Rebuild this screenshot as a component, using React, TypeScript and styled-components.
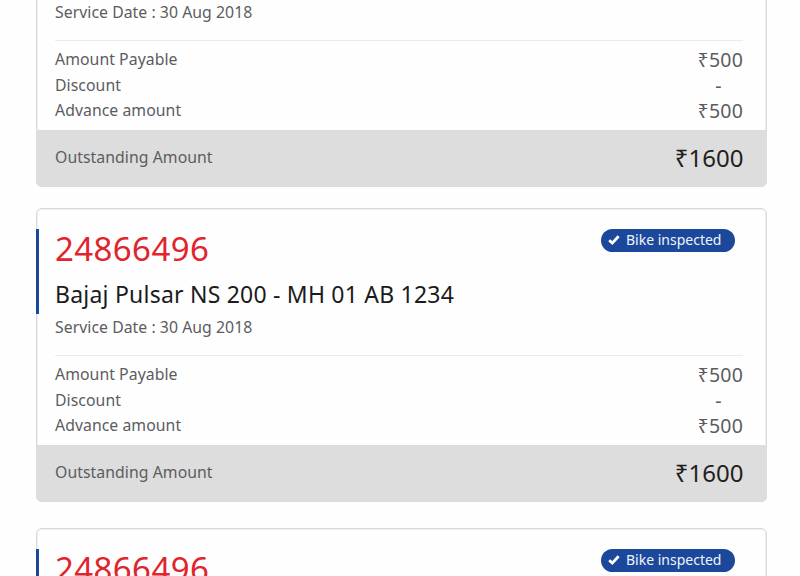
import React from "react";
import styled, { createGlobalStyle } from "styled-components";

const GlobalStyle = createGlobalStyle`
  * { box-sizing: border-box; }
  html, body { margin: 0; background: #fefefe; overflow: hidden; }
  body { font-family: "Noto Sans", "Open Sans", sans-serif; color: #5c5c5e; }
`;

const Page = styled.main`
  height: 576px;
  overflow: hidden;
  padding-left: 36px;
`;

const List = styled.div`
  display: flex;
  flex-direction: column;
  margin-top: -107px;
`;

const Card = styled.article<{ $gap: number }>`
  position: relative;
  flex: none;
  display: flex;
  flex-direction: column;
  width: 731px;
  height: 294px;
  margin-bottom: ${(p) => p.$gap}px;
  border: 1px solid #d8d8d9;
  border-radius: 6px;
  background: #fefefe;
  box-shadow: inset 0 0 0 1px #f0f0f1;
`;

const Accent = styled.span`
  position: absolute;
  left: -1px;
  top: 20px;
  width: 3px;
  height: 85px;
  background: #1c489b;
`;

const Header = styled.header`
  display: flex;
  justify-content: space-between;
  align-items: flex-start;
  height: 147px;
  margin: 0 23px 0 18px;
  padding-top: 18px;
  border-bottom: 1px solid #ececed;
`;

const Details = styled.div`
  display: flex;
  flex-direction: column;
  white-space: nowrap;
`;

const BookingId = styled.div`
  height: 49px;
  font-size: 33px;
  line-height: 43px;
  letter-spacing: 0.4px;
  color: #e0252d;
`;

const Vehicle = styled.div`
  height: 39px;
  font-size: 23px;
  line-height: 36px;
  letter-spacing: 0.22px;
  color: #1b1b1c;
`;

const ServiceDate = styled.div`
  font-size: 15.8px;
  line-height: 25px;
  letter-spacing: 0.04px;
`;

const Badge = styled.div`
  display: flex;
  align-items: center;
  gap: 6px;
  width: 133.5px;
  height: 23px;
  margin: 2px 8.5px 0 0;
  padding-left: 7px;
  border-radius: 12px;
  background: #1c489b;
  color: #f0f4fb;
  font-size: 14px;
  line-height: 22px;
  white-space: nowrap;
`;

const BadgeText = styled.span`
  height: 23px;
  letter-spacing: 0px;
`;

const Charges = styled.div`
  display: flex;
  flex-direction: column;
  flex: 1;
  margin: 0 23px 0 18px;
  padding-top: 6px;
`;

const Row = styled.div`
  display: flex;
  justify-content: space-between;
  height: 25.6px;
  line-height: 25.6px;
`;

const Label = styled.span`
  font-size: 15.8px;
  letter-spacing: 0.05px;
`;

const Amount = styled.span<{ $empty: boolean }>`
  min-width: 45px;
  padding-right: ${(p) => (p.$empty ? "4px" : "0")};
  text-align: center;
  font-size: 19.5px;
  line-height: 25px;
  letter-spacing: 0.2px;
`;

const Footer = styled.footer`
  display: flex;
  justify-content: space-between;
  align-items: center;
  height: 57px;
  margin: 0 -1px -1px;
  padding: 0 23.5px 3px 19px;
  border-radius: 0 0 6px 6px;
  background: #dddddd;
`;

const Total = styled.span`
  font-size: 24px;
  color: #1f1f20;
`;

const Check = () => (
  <svg width="12" height="11" viewBox="0 0 12 11" fill="none">
    <path d="M1.2 5.2 4.3 8.1 10.6 1.2" stroke="#fff" strokeWidth="2.8" />
  </svg>
);

const charges = [
  { label: "Amount Payable", value: "₹500" },
  { label: "Discount", value: "-" },
  { label: "Advance amount", value: "₹500" },
];

const bookings = [
  { key: "a", gap: 21 },
  { key: "b", gap: 26 },
  { key: "c", gap: 0 },
];

export default function App() {
  return (
    <>
      <GlobalStyle />
      <Page>
        <List>
          {bookings.map((b) => (
            <Card key={b.key} $gap={b.gap}>
              <Accent />
              <Header>
                <Details>
                  <BookingId>24866496</BookingId>
                  <Vehicle>Bajaj Pulsar NS 200 - MH 01 AB 1234</Vehicle>
                  <ServiceDate>Service Date : 30 Aug 2018</ServiceDate>
                </Details>
                <Badge>
                  <Check />
                  <BadgeText>Bike inspected</BadgeText>
                </Badge>
              </Header>
              <Charges>
                {charges.map((c) => (
                  <Row key={c.label}>
                    <Label>{c.label}</Label>
                    <Amount $empty={c.value === "-"}>{c.value}</Amount>
                  </Row>
                ))}
              </Charges>
              <Footer>
                <Label>Outstanding Amount</Label>
                <Total>₹1600</Total>
              </Footer>
            </Card>
          ))}
        </List>
      </Page>
    </>
  );
}
